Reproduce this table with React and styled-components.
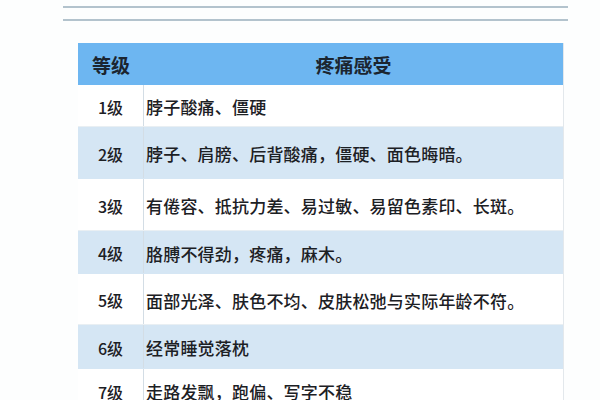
import React from 'react';
import styled, {createGlobalStyle} from 'styled-components';

// CSS starts
const GlobalStyle = createGlobalStyle`
    html, body {
        margin: 0;
        padding: 0;
        background: #fdfefe;
    }
    body {
        font-family: "Noto Sans CJK SC", "Noto Sans", sans-serif;
        color: #1c2024;
    }
`;

const StyledPage = styled.div`
    width: 600px;
    height: 400px;
    overflow: hidden;
    padding-top: 6px;
    box-sizing: border-box;
`;

const StyledRules = styled.div`
    display: flex;
    flex-direction: column;
    gap: 11px;
    margin: 0 32px 0 63px;
`;

const StyledRule = styled.div`
    height: 2px;
    background-color: #b3c3cd;
`;

const StyledTable = styled.div`
    margin: 22px 36px 0 78px;
    display: flex;
    flex-direction: column;
    border-right: 1px solid #e3e8ec;
`;

const StyledRow = styled.div`
    display: grid;
    grid-template-columns: 66px 1fr;
    height: ${(props) => props.$height}px;
    background-color: ${(props) => props.$shade ? '#d5e6f4' : '#ffffff'};
    border-bottom: 1px solid ${(props) => props.$shade ? '#d5e6f4' : '#e9eff3'};
    box-sizing: border-box;
`;

const StyledHeadRow = styled(StyledRow)`
    background-color: #6db6f1;
    border-bottom: none;
`;

const StyledHeadCell = styled.div`
    display: flex;
    align-items: center;
    justify-content: center;
    font-size: 19px;
    font-weight: 700;
    color: #1b2530;
`;

const StyledLevel = styled.div`
    display: flex;
    align-items: center;
    justify-content: center;
    font-size: 16px;
    font-weight: 500;
    border-right: 1px solid #d3dde5;
    padding-top: 2px;
`;

const StyledFeel = styled.div`
    display: flex;
    align-items: center;
    padding: 2px 0 0 2px;
    font-size: 17px;
    font-weight: 500;
    letter-spacing: 0.2px;
    white-space: nowrap;
`;
// CSS ends

const rows = [
    {level: '1级', text: '脖子酸痛、僵硬', height: 42},
    {level: '2级', text: '脖子、肩膀、后背酸痛，僵硬、面色晦暗。', height: 52},
    {level: '3级', text: '有倦容、抵抗力差、易过敏、易留色素印、长斑。', height: 52},
    {level: '4级', text: '胳膊不得劲，疼痛，麻木。', height: 43},
    {level: '5级', text: '面部光泽、肤色不均、皮肤松弛与实际年龄不符。', height: 51},
    {level: '6级', text: '经常睡觉落枕', height: 44},
    {level: '7级', text: '走路发飘，跑偏、写字不稳', height: 44},
];

const App = () => {
    return (
        <StyledPage>
            <GlobalStyle/>
            <StyledRules>
                <StyledRule/>
                <StyledRule/>
            </StyledRules>
            <StyledTable>
                <StyledHeadRow $height={42}>
                    <StyledHeadCell>等级</StyledHeadCell>
                    <StyledHeadCell>疼痛感受</StyledHeadCell>
                </StyledHeadRow>
                {rows.map((row, i) => (
                    <StyledRow key={row.level} $height={row.height} $shade={i % 2 === 1}>
                        <StyledLevel>{row.level}</StyledLevel>
                        <StyledFeel>{row.text}</StyledFeel>
                    </StyledRow>
                ))}
            </StyledTable>
        </StyledPage>
    );
};

export default App;
